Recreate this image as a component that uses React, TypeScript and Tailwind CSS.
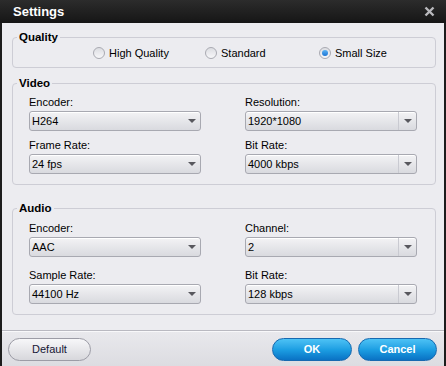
import React from "react";

const font = { fontFamily: '"Liberation Sans", Arial, sans-serif' };

function Radio({ label, checked }: { label: string; checked?: boolean }) {
  return (
    <div className="flex items-center gap-[4px]">
      <span className="flex h-[12px] w-[12px] items-center justify-center rounded-full border border-[#a9aab2] bg-gradient-to-b from-[#dcdde2] to-[#f7f7f9]">
        {checked && (
          <span className="h-[6px] w-[6px] rounded-full bg-gradient-to-b from-[#5ab2f4] to-[#1a74d4]" />
        )}
      </span>
      <span className="text-[11px] leading-[14px] text-black">{label}</span>
    </div>
  );
}

function Select({ value, split }: { value: string; split?: boolean }) {
  return (
    <div className="flex h-[20px] w-[172px] items-center rounded-[3px] border border-[#a8a9b1] bg-gradient-to-b from-[#f3f3f5] to-[#d9dadf] shadow-[inset_0_1px_0_#ffffff]">
      <span className="flex-1 pl-[2px] text-[11px] leading-[14px] text-black">{value}</span>
      <span
        className={
          split
            ? "flex h-full w-[18px] items-center justify-center border-l border-[#c9cad1]"
            : "flex h-full w-[18px] items-center justify-center pl-[2px]"
        }
      >
        <svg width="8" height="4" viewBox="0 0 8 4">
          <path d="M0 0h8L4 4z" fill="#58585e" />
        </svg>
      </span>
    </div>
  );
}

function Field({ label, value, split, className = "" }: { label: string; value: string; split?: boolean; className?: string }) {
  return (
    <div className={"flex flex-col " + className}>
      <span className="text-[11px] leading-[14px] text-black">{label}</span>
      <div className="mt-[2px]">
        <Select value={value} split={split} />
      </div>
    </div>
  );
}

export default function App() {
  return (
    <div className="flex h-[366px] w-[446px] flex-col bg-[#1c1c1c]" style={font}>
      <div className="flex h-[23px] items-center justify-between bg-gradient-to-b from-[#2c2c2c] to-[#161616] pl-[13px] pr-[11px]">
        <span className="text-[13px] font-bold text-white">Settings</span>
        <svg width="11" height="11" viewBox="0 0 11 11">
          <path d="M1.5 1.5l8 8M9.5 1.5l-8 8" stroke="#b9b9bd" strokeWidth="2.4" />
        </svg>
      </div>

      <div className="mx-[2px] flex flex-1 flex-col bg-[#ececf0]">
        <div className="flex flex-col pl-[10px]">
          <fieldset className="mt-[7px] w-[424px] rounded-[4px] border border-[#cdcdd5] pl-[4px]">
            <legend className="px-[2px] text-[11.5px] font-bold leading-[14px] text-black">Quality</legend>
            <div className="mb-[7px] mt-[2px] flex h-[14px] items-center pl-[76px]">
              <div className="w-[112px]">
                <Radio label="High Quality" />
              </div>
              <div className="w-[114px]">
                <Radio label="Standard" />
              </div>
              <Radio label="Small Size" checked />
            </div>
          </fieldset>

          <fieldset className="mt-[8px] w-[424px] rounded-[4px] border border-[#cdcdd5] pl-[4px]">
            <legend className="px-[2px] text-[11.5px] font-bold leading-[14px] text-black">Video</legend>
            <div className="mt-[5px] grid grid-cols-[172px_172px] gap-x-[44px] pb-[10px] pl-[12px]">
              <Field label="Encoder:" value="H264" />
              <Field label="Resolution:" value="1920*1080" split />
              <Field label="Frame Rate:" value="24 fps" className="mt-[7px]" />
              <Field label="Bit Rate:" value="4000 kbps" split className="mt-[7px]" />
            </div>
          </fieldset>

          <fieldset className="mt-[16px] w-[424px] rounded-[4px] border border-[#cdcdd5] pl-[4px]">
            <legend className="px-[2px] text-[11.5px] font-bold leading-[14px] text-black">Audio</legend>
            <div className="mt-[6px] grid grid-cols-[172px_172px] gap-x-[44px] pb-[10px] pl-[12px]">
              <Field label="Encoder:" value="AAC" />
              <Field label="Channel:" value="2" split />
              <Field label="Sample Rate:" value="44100 Hz" className="mt-[11px]" />
              <Field label="Bit Rate:" value="128 kbps" split className="mt-[11px]" />
            </div>
          </fieldset>
        </div>

        <div className="mt-auto flex h-[36px] items-start justify-between border-t border-[#b9b9c1] bg-gradient-to-b from-[#e9e9ed] to-[#dcdce1] pl-[6px] pr-[7px] pt-[7px] shadow-[inset_0_1px_0_#f8f8fa]">
          <button className="h-[23px] w-[83px] rounded-full border border-[#9c9ca6] bg-gradient-to-b from-[#f7f7f9] to-[#d7d7dc] text-[11px] text-[#161634]">
            Default
          </button>
          <div className="flex gap-[6px]">
            <button className="h-[23px] w-[80px] rounded-full border border-[#1769b0] bg-gradient-to-b from-[#4cc2f5] via-[#1d9fe3] to-[#0a72c4] text-[11px] font-bold text-white">
              OK
            </button>
            <button className="h-[23px] w-[79px] rounded-full border border-[#1769b0] bg-gradient-to-b from-[#4cc2f5] via-[#1d9fe3] to-[#0a72c4] text-[11px] font-bold text-white">
              Cancel
            </button>
          </div>
        </div>
      </div>
    </div>
  );
}
